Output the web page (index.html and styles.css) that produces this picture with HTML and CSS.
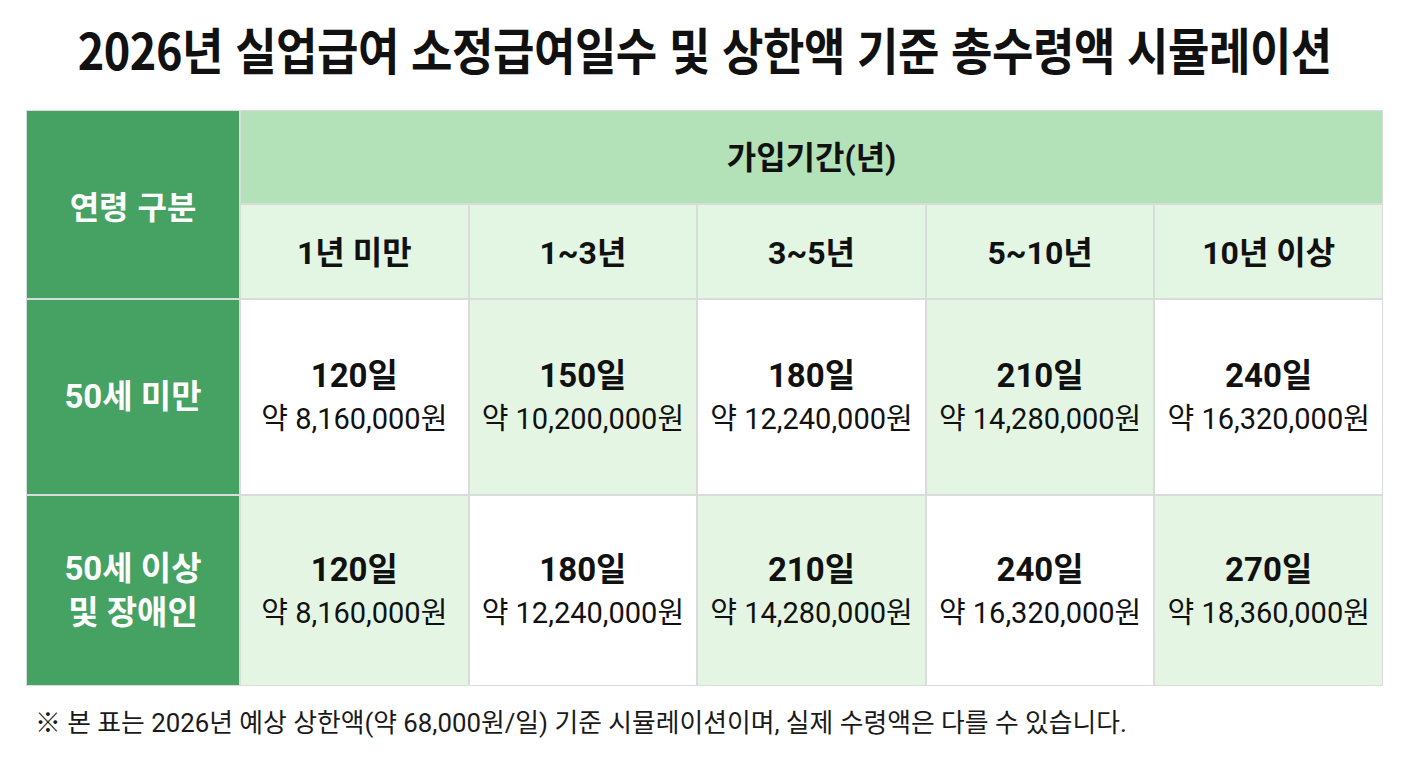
FILE: index.html
```html
<!DOCTYPE html>
<html lang="ko">
<head>
<meta charset="utf-8">
<title>2026년 실업급여 시뮬레이션</title>
<link rel="stylesheet" href="styles.css">
</head>
<body>
<main class="page">
  <h1 class="title"><span class="title-inner">2026년 실업급여 소정급여일수 및 상한액 기준 총수령액 시뮬레이션</span></h1>
  <div class="table">
    <div class="cell age-head">연령 구분</div>
    <div class="cell period-head">가입기간(년)</div>
    <div class="cell sub-head">1년 미만</div>
    <div class="cell sub-head">1~3년</div>
    <div class="cell sub-head">3~5년</div>
    <div class="cell sub-head">5~10년</div>
    <div class="cell sub-head">10년 이상</div>

    <div class="cell age">50세 미만</div>
    <div class="cell data white"><div class="days">120일</div><div class="amount">약 8,160,000원</div></div>
    <div class="cell data green"><div class="days">150일</div><div class="amount">약 10,200,000원</div></div>
    <div class="cell data white"><div class="days">180일</div><div class="amount">약 12,240,000원</div></div>
    <div class="cell data green"><div class="days">210일</div><div class="amount">약 14,280,000원</div></div>
    <div class="cell data white"><div class="days">240일</div><div class="amount">약 16,320,000원</div></div>

    <div class="cell age">50세 이상<br>및 장애인</div>
    <div class="cell data green"><div class="days">120일</div><div class="amount">약 8,160,000원</div></div>
    <div class="cell data white"><div class="days">180일</div><div class="amount">약 12,240,000원</div></div>
    <div class="cell data green"><div class="days">210일</div><div class="amount">약 14,280,000원</div></div>
    <div class="cell data white"><div class="days">240일</div><div class="amount">약 16,320,000원</div></div>
    <div class="cell data green"><div class="days">270일</div><div class="amount">약 18,360,000원</div></div>
  </div>
  <p class="note">※ 본 표는 2026년 예상 상한액(약 68,000원/일) 기준 시뮬레이션이며, 실제 수령액은 다를 수 있습니다.</p>
</main>
</body>
</html>
```

FILE: styles.css
```css
* { box-sizing: border-box; }
html, body { margin: 0; padding: 0; background: #ffffff; }
body {
  font-family: Roboto, "Noto Sans CJK KR", sans-serif;
  color: #111;
  width: 1408px;
  height: 768px;
  overflow: hidden;
}
.page {
  padding: 0 25px 0 26px;
}
.title {
  margin: 18px 0 0;
  height: 60px;
  display: flex;
  justify-content: center;
  font-family: "Noto Sans CJK KR", sans-serif;
  font-size: 50px;
  font-weight: 700;
  line-height: 60px;
  white-space: nowrap;
  letter-spacing: -0.5px;
}
.title-inner {
  flex: none;
  display: block;
  transform: scaleX(0.9);
  transform-origin: center;
}
.table {
  margin-top: 32px;
  display: grid;
  grid-template-columns: 212px repeat(5, 1fr);
  grid-template-rows: 92px 93px 194px 189px;
  gap: 2px;
  padding: 1px;
  background: #d9ddd9;
  width: 1357px;
}
.cell {
  display: flex;
  flex-direction: column;
  align-items: center;
  justify-content: center;
  text-align: center;
}
.age-head {
  grid-row: 1 / span 2;
  background: #45a263;
  color: #fff;
  font-size: 32px;
  font-weight: 700;
  font-family: "Noto Sans CJK KR", sans-serif;
}
.period-head {
  grid-column: 2 / span 5;
  background: #b3e1b8;
  font-size: 32px;
  font-weight: 700;
  padding-bottom: 4px;
}
.sub-head {
  background: #e3f5e3;
  font-size: 32px;
  font-weight: 700;
  padding-bottom: 4px;
}
.age {
  background: #45a263;
  color: #fff;
  font-size: 33px;
  font-weight: 700;
  line-height: 44px;
}
.data.white { background: #ffffff; }
.data.green { background: #e4f6e3; }
.days {
  font-size: 33px;
  font-weight: 700;
  line-height: 44px;
}
.amount {
  font-size: 29px;
  font-weight: 400;
  line-height: 42px;
  white-space: nowrap;
}
.note {
  margin: 20px 0 0;
  padding-left: 9px;
  font-size: 25.8px;
  line-height: 34px;
  color: #1a1a1a;
  white-space: nowrap;
}
```
